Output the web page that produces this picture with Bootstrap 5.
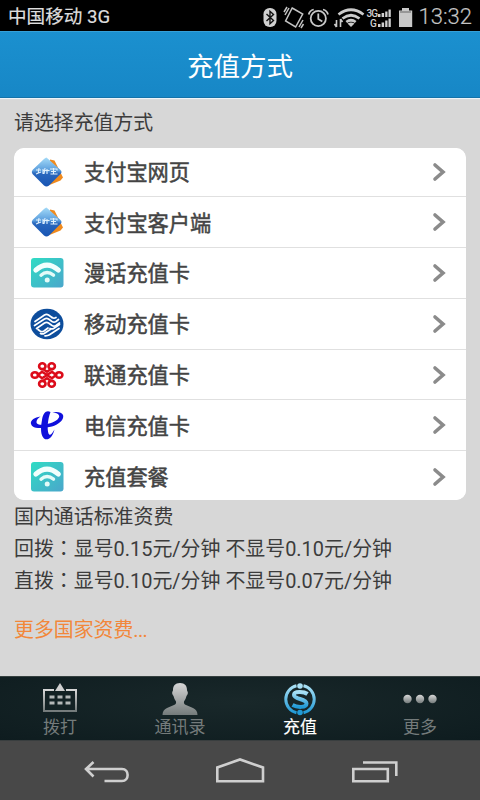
<!DOCTYPE html>
<html lang="zh-CN">
<head>
<meta charset="utf-8">
<meta name="viewport" content="width=device-width, initial-scale=1">
<title>充值方式</title>
<link href="https://cdn.jsdelivr.net/npm/bootstrap@5.3.0/dist/css/bootstrap.min.css" rel="stylesheet">
<style>
body{font-family:Roboto,"Noto Sans CJK SC",sans-serif;background:#d7d7d7;color:#3c3c3c;height:800px;overflow:hidden;line-height:1}
svg{display:block;flex:none}
.status-bar{height:31px;background:#000;color:#dedede;font-size:18.6px;padding:1px 8px 0 8px}
.carrier{-webkit-text-stroke:.2px;padding-top:2px}
.clock{font-size:22px;color:#c4c4c4;font-weight:300;-webkit-text-stroke:.2px;padding-top:2px}
.title-bar{height:67px;background:linear-gradient(#1b90cf,#1787c6);border-top:1px solid #35a0d8;border-bottom:1px solid #1573a9;color:#fff;font-size:26.5px;padding-top:6px;box-shadow:0 1px 1px #eef4f8}
.page-main{padding:0 14px}
.prompt{font-size:19.9px;height:49.5px;padding-top:2px}
.pay-list{border-radius:10px;background:#fff;height:352.5px;overflow:hidden}
.pay-list .list-group-item{flex:none;height:50.8px;padding:0 20px 0 16px;border:0;border-bottom:1.5px solid #e0e0e0;font-size:21.2px;color:#444;background:#fff}
.pay-list .list-group-item:first-child{height:49.8px}
.pay-list .list-group-item:last-child{border-bottom:0;height:51px}
.pay-name{margin-left:20px;padding-top:2px;-webkit-text-stroke:.5px #444}
.rates{font-size:19.93px;line-height:32.2px;padding-top:1.7px}
.rates p{margin:0;white-space:nowrap;height:32.2px}
.colon{font-family:"Noto Sans CJK TC",sans-serif;line-height:1}
.more-link{color:#f2873a;font-size:19.9px;line-height:32px;margin-top:16.300px}
.ellipsis{letter-spacing:-.7px}
.tab-bar{height:64px;background:radial-gradient(ellipse at 50% 40%,#19282a,#0e1c1f);border-top:1px solid #35403f;font-size:17px;color:#747b7b}
.tab-bar .nav-link{color:inherit;padding:5px 0 0}
.tab-bar .nav-link.active{color:#fff;-webkit-text-stroke:.15px}
.tab-bar svg{margin-bottom:3px}
.key-bar{height:60px;background:#484848;border-top:1px solid #393e3f}
</style>
</head>
<body class="d-flex flex-column">
<svg width="0" height="0" class="position-absolute">
<defs>
<linearGradient id="blueFace" x1="0" y1="0" x2="0" y2="1"><stop offset="0" stop-color="#a4dbf8"/><stop offset=".45" stop-color="#5a9ddd"/><stop offset=".55" stop-color="#2a68be"/><stop offset="1" stop-color="#1855b4"/></linearGradient>
<linearGradient id="tealFace" x1="0" y1="0" x2="1" y2="1"><stop offset="0" stop-color="#2fdcc4"/><stop offset="1" stop-color="#4ba6cb"/></linearGradient>
<linearGradient id="silver" x1="0" y1="0" x2="0" y2="1"><stop offset="0" stop-color="#d6d6d6"/><stop offset="1" stop-color="#747b7b"/></linearGradient>
<linearGradient id="coin" x1="0" y1="0" x2="0" y2="1"><stop offset="0" stop-color="#a9e0f5"/><stop offset="1" stop-color="#219ad6"/></linearGradient>
<symbol id="alipay" viewBox="0 0 34 34">
<path d="M20 4.500 24.500 5.500 33 22.500 30.500 25.500 17 31Z" fill="#f08a1c"/>
<path d="M16.500 2.500 30.500 15Q32.500 17 30.500 19L19 30.500Q16.500 32.500 14 30.500L2.500 19Q1 17 2.500 15L14 4Q15.500 2.500 16.500 2.500Z" fill="url(#blueFace)"/>
<path d="M6 15h5M9 13 8 19M6 19l5-2M13 14v5M12.500 15.500h7M15 13l-1 6M17 14v5M20 14h7v1.500M23.500 13v6M20.500 19h7M21 16.500h5" fill="none" stroke="#e1f1fd" stroke-width="1.100"/>
</symbol>
<symbol id="wifiCard" viewBox="0 0 34 34">
<rect x="1" y="2" width="32.500" height="29.500" rx="3" fill="url(#tealFace)"/>
<path d="M5.800 14.200Q17 4.200 28.400 14.200" fill="none" stroke="#f2fffd" stroke-width="5" stroke-linecap="round"/>
<path d="M11 19.200Q17 14 23.500 19.200" fill="none" stroke="#e4fbf8" stroke-width="3.400" stroke-linecap="round"/>
<circle cx="17.200" cy="24" r="2.500" fill="#e4fbf8"/>
</symbol>
<symbol id="mobile" viewBox="0 0 34 34">
<ellipse cx="17" cy="17" rx="16.500" ry="15.200" fill="#0d4d9c"/>
<g fill="none" stroke="#fff" stroke-width="1.700" stroke-linejoin="round" stroke-linecap="round">
<path d="M5 14.500 14.500 8q2-1.300 4 0l3.500 2.500M4.500 18.500 14.500 12q2-1.300 4 0l3.500 2.500q2 1.300 4 0l2.500-2M6.500 21.500 14.500 16q2-1.300 4 0l3.500 2.500q2 1.300 4 0l3.500-2.500"/>
<path d="M8 22.500l2 1.500q2 1.300 4 0l4-3M10.500 26.500q2 1 4-.3l6.500-4.200M15 28.800q2.500.2 4.500-1L29 21.500M22 10.500q2 1.300 4 0M20 21.500q2 1 4-.3l5.500-3.700"/>
</g>
</symbol>
<symbol id="unicom" viewBox="0 0 34 34">
<g fill="none" stroke="#dc0c1a" stroke-width="2.600">
<ellipse cx="4.900" cy="17" rx="3.300" ry="2.800"/><ellipse cx="29.100" cy="17" rx="3.300" ry="2.800"/>
<ellipse cx="12.300" cy="8.200" rx="3.200" ry="2.900"/><ellipse cx="21.700" cy="8.200" rx="3.200" ry="2.900"/>
<ellipse cx="12.300" cy="25.800" rx="3.200" ry="2.900"/><ellipse cx="21.700" cy="25.800" rx="3.200" ry="2.900"/>
<path d="M8 17l4-3.300L17 17l-5 3.300ZM26 17l-4-3.300L17 17l5 3.300ZM13 11l4 2.700 4-2.700M13 23l4-2.700 4 2.700" stroke-width="2.400"/>
</g>
</symbol>
<symbol id="telecom" viewBox="0 0 34 34">
<path d="M10.500 8.500C2 10-1.500 14.500 2.500 18.200 6.500 21.300 16 20 22 18.500 29 16.500 34.500 11.500 33 7 32 4.500 27 3 22.500 4.500 29 5 31 8 27.500 11.500 23 15.500 10 18.500 7 15.500 5.500 13.500 7.500 10.500 10.500 8.500Z" fill="#1010dc"/>
<path d="M20.500 4C16.500 1.500 13 5 12 12 10.500 20 10.500 27 14 30.500 17.500 33 22.500 30 24.500 21.500 21.500 27 19.500 28 18.500 25.500 17 21 17.500 12 20.500 4Z" fill="#1010dc"/>
</symbol>
<symbol id="chev" viewBox="0 0 14 20"><path d="M3 3l8 7-8 7" fill="none" stroke="#8b8b8b" stroke-width="3.600" stroke-linecap="round" stroke-linejoin="miter"/></symbol>
</defs>
</svg>

<header class="status-bar d-flex align-items-center justify-content-between flex-shrink-0">
<span class="carrier">中国移动 3G</span>
<span class="d-flex align-items-center">
<svg width="159" height="28" viewBox="260 0 159 28">
<rect x="263.500" y="6" width="13" height="19" rx="6.200" fill="#d0d0d0"/>
<path d="M266.500 12l7 6.500-3.500 3.200V9.300l3.500 3.200-7 6.500" fill="none" stroke="#111" stroke-width="1.400"/>
<g fill="none" stroke="#c4c4c4" stroke-width="1.500"><path d="M290.500 6.500 302 10.500 297.500 24.500 286.500 20.500Z" transform="rotate(11 294 15)"/><path d="M285 13l4-7M287 5l-3 5M303 18l-4 7M301 26l2.500-4"/></g>
<g fill="none" stroke="#c8c8c8" stroke-width="1.800"><circle cx="318.300" cy="16.500" r="7.600"/><path d="M318.300 11.500v5.500l4 2.500M308.700 12.500q1-4 5-5M328 12.500q-1-4-5-5"/></g>
<g fill="none" stroke="#cbcbcb" stroke-width="2.700"><path d="M338.500 12.500q12.500-9.500 25 0M342.500 16.500q8.500-6.500 17 0M346.300 20q4.700-3.500 9.400 0"/></g>
<path d="M347.500 21.500q3.500-2 7 0l-3.500 3.500Z" fill="#cbcbcb"/>
<path d="M336.500 25v-7M334.500 22l2 3M340.500 17v8M340.500 17l2 3" stroke="#cbcbcb" stroke-width="1.600"/>
<g fill="#d0d0d0" font-family="Roboto,sans-serif" font-weight="500" font-size="10"><text x="366.500" y="15.300" textLength="11.500">3G</text><text x="370" y="25.300">G</text></g>
<path d="M378 12h2.500v3H378zM381.600 11h2.500v4h-2.500zM385.200 9.500h2.300V15h-2.300zM388.500 7.500h2.300V15h-2.300zM378 22h2.500v3H378zM381.600 20.500h2.500V25h-2.500zM385.200 18.500h2.300V25h-2.300zM388.500 16.500h2.300V25h-2.300z" fill="#d0d0d0"/>
<path d="M399 8.500h3V6h7v2.500h3.200V25H399z" fill="#c8c8c8"/><path d="M400 10h11" stroke="#666"/>
</svg>
<span class="clock">13:32</span>
</span>
</header>

<div class="title-bar d-flex align-items-center justify-content-center flex-shrink-0">充值方式</div>

<main class="page-main flex-grow-1">
<div class="prompt d-flex align-items-center">请选择充值方式</div>
<div class="pay-list list-group">
<div class="list-group-item d-flex align-items-center"><svg width="34" height="34"><use href="#alipay"/></svg><span class="pay-name flex-grow-1">支付宝网页</span><svg width="14" height="20"><use href="#chev"/></svg></div>
<div class="list-group-item d-flex align-items-center"><svg width="34" height="34"><use href="#alipay"/></svg><span class="pay-name flex-grow-1">支付宝客户端</span><svg width="14" height="20"><use href="#chev"/></svg></div>
<div class="list-group-item d-flex align-items-center"><svg width="34" height="34"><use href="#wifiCard"/></svg><span class="pay-name flex-grow-1">漫话充值卡</span><svg width="14" height="20"><use href="#chev"/></svg></div>
<div class="list-group-item d-flex align-items-center"><svg width="34" height="34"><use href="#mobile"/></svg><span class="pay-name flex-grow-1">移动充值卡</span><svg width="14" height="20"><use href="#chev"/></svg></div>
<div class="list-group-item d-flex align-items-center"><svg width="34" height="34"><use href="#unicom"/></svg><span class="pay-name flex-grow-1">联通充值卡</span><svg width="14" height="20"><use href="#chev"/></svg></div>
<div class="list-group-item d-flex align-items-center"><svg width="34" height="34"><use href="#telecom"/></svg><span class="pay-name flex-grow-1">电信充值卡</span><svg width="14" height="20"><use href="#chev"/></svg></div>
<div class="list-group-item d-flex align-items-center"><svg width="34" height="34"><use href="#wifiCard"/></svg><span class="pay-name flex-grow-1">充值套餐</span><svg width="14" height="20"><use href="#chev"/></svg></div>
</div>
<div class="rates">
<p>国内通话标准资费</p>
<p>回拨<span class="colon" lang="zh-TW">：</span>显号0.15元/分钟 不显号0.10元/分钟</p>
<p>直拨<span class="colon" lang="zh-TW">：</span>显号0.10元/分钟 不显号0.07元/分钟</p>
</div>
<a class="more-link d-block text-decoration-none">更多国家资费<span class="ellipsis">...</span></a>
</main>

<nav class="tab-bar nav nav-fill flex-nowrap flex-shrink-0">
<a class="nav-link col-3 d-flex flex-column align-items-center"><svg width="36" height="34" viewBox="0 0 36 34"><path d="M12 8H2v21h32V8H24" fill="none" stroke="url(#silver)" stroke-width="2"/><path d="M18 1l5 8H13z" fill="#d0d0d0"/><path d="M7.500 13.500h5v3h-5zM15.500 13.500h5v3h-5zM23.500 13.500h5v3h-5zM7.500 19.500h5v3h-5zM15.500 19.500h5v3h-5zM23.500 19.500h5v3h-5z" fill="#b4b8b8"/></svg>拨打</a>
<a class="nav-link col-3 d-flex flex-column align-items-center"><svg width="36" height="34" viewBox="0 0 36 34"><path d="M18 1c5 0 7 3 7 7q0 1 .8 2 .5 2.500-1.300 4Q23.500 18 22 19.500q-.5 2.500 2 3.500l7 3q4.500 2 4.500 7h-35q0-5 4.500-7l7-3q2.500-1 2-3.500-1.500-1.500-2.500-5.500-1.800-1.500-1.300-4Q11 9 11 8c0-4 2-7 7-7Z" fill="url(#silver)"/></svg>通讯录</a>
<a class="nav-link active col-3 d-flex flex-column align-items-center"><svg width="36" height="34" viewBox="0 0 36 34"><g fill="none" stroke="url(#coin)"><path d="M14.500 3.800A13.800 13.800 0 0 0 14.500 30.700M21.500 3.800A13.800 13.800 0 0 1 21.500 30.700" stroke-width="3"/><path d="M25.500 12C22 9.500 12 9 12 13c0 4.500 12.500 3.500 12.500 8.500 0 4.500-9.500 4-14 1.500" stroke-width="4"/></g><circle cx="18" cy="4" r="2.800" fill="#a9e0f5"/><circle cx="18" cy="30.500" r="2.800" fill="#219ad6"/></svg>充值</a>
<a class="nav-link col-3 d-flex flex-column align-items-center"><svg width="36" height="34" viewBox="0 0 36 34"><g fill="url(#silver)"><circle cx="5.500" cy="17" r="4.200"/><circle cx="18" cy="17" r="4.200"/><circle cx="30.500" cy="17" r="4.200"/></g></svg>更多</a>
</nav>
<footer class="key-bar flex-shrink-0">
<svg width="480" height="59" viewBox="0 741 480 59" fill="none" stroke="#cfcfcf" stroke-width="2.600"><path d="M93.500 762 86 769l7.500 7.500M86 769h36c7.500 0 7.500 12 0 12h-17.500"/><path d="M217.300 781.300V767.500L240 759.500l23 8v13.800Z"/><path d="M353.300 769h34.500v12.300h-34.500zM363 762.500h33.300V776"/></svg>
</footer>
<script src="https://cdn.jsdelivr.net/npm/bootstrap@5.3.0/dist/js/bootstrap.bundle.min.js"></script>
</body>
</html>
